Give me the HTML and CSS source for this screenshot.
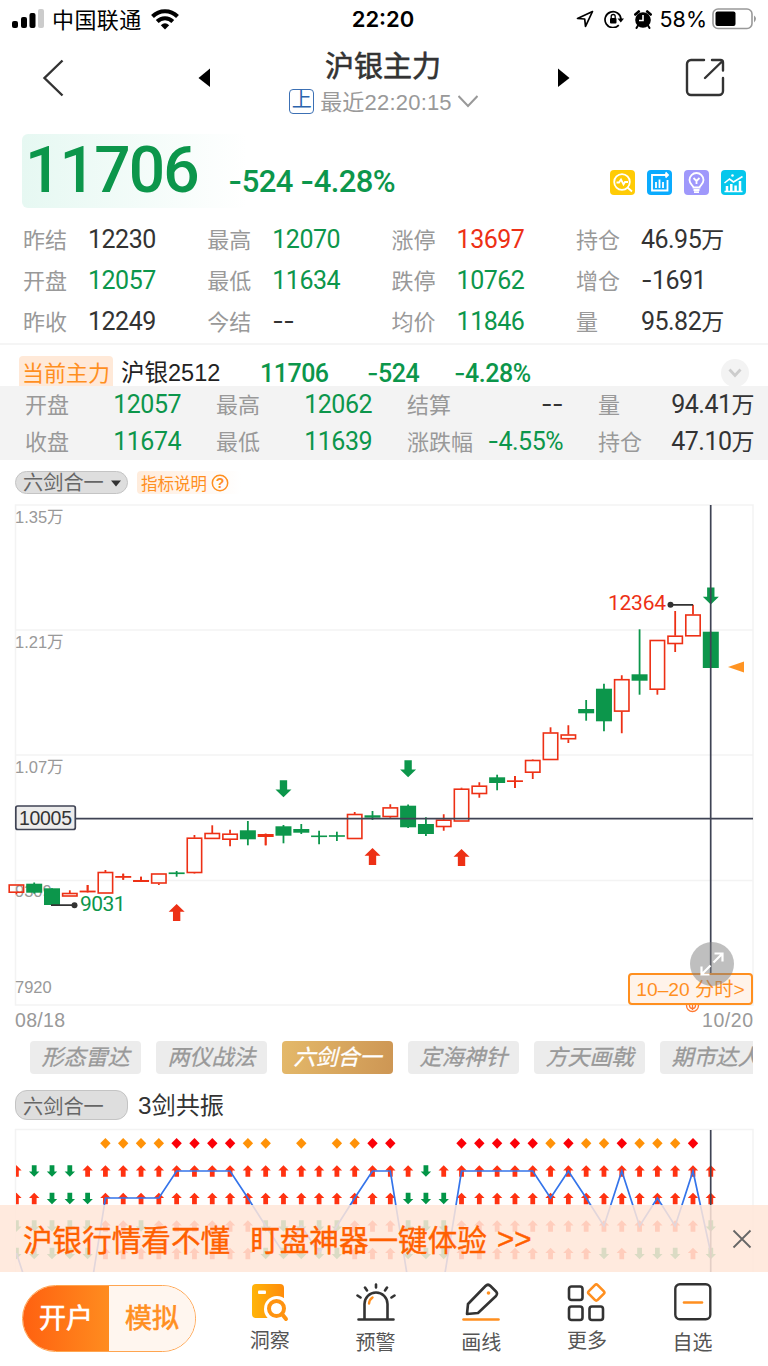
FILE: index.html
```html
<!DOCTYPE html>
<html lang="zh-CN">
<head>
    <meta charset="utf-8">
    <title>沪银主力</title>
    <link rel="stylesheet" href="styles.css">
</head>
<body>
    <div class="status-bar">
        <div class="status-left">
            <svg width="32" height="20" viewBox="0 0 32 20">
                <rect x="0" y="12" width="6" height="7" rx="2"/>
                <rect x="9" y="8" width="6" height="11" rx="2"/>
                <rect x="17.5" y="4" width="6" height="15" rx="2"/>
                <rect x="26" y="0" width="6" height="19" rx="2" fill="#ccc"/>
            </svg>
            <span class="carrier">中国联通</span>
            <svg width="28" height="21" viewBox="0 0 28 21" fill="none" stroke="#000" stroke-width="4">
                <path d="M1.5 7.5C8.5 0.4 19.500 0.400 26.500 7.500"/>
                <path d="M6.200 12.500C10.500 8.200 17.500 8.200 21.800 12.500"/>
                <path d="M14 20.500L9.800 16.200Q14 12.500 18.200 16.200Z" fill="#000" stroke="none"/>
            </svg>
        </div>
        <div class="status-time">22:20</div>
        <div class="status-right">
            <svg width="18" height="18" viewBox="0 0 18 18" fill="none" stroke="#000" stroke-width="1.7" stroke-linejoin="round"><path d="M16.500 1.500L1.500 8.500L8.700 9L9.500 16.300Z"/></svg>
            <svg class="lock" width="20" height="18" viewBox="0 0 20 18">
                <path d="M14.800 15.200A8 8 0 1 1 17 9" fill="none" stroke="#000" stroke-width="1.700"/>
                <path d="M13.500 8.500H20L16.800 12.500Z"/>
                <rect x="6" y="8" width="6.500" height="5.500" rx="1"/>
                <path d="M7.200 8V6.500A2 2 0 0 1 11.200 6.500V8" fill="none" stroke="#000" stroke-width="1.300"/>
            </svg>
            <svg class="alarm" width="18" height="19" viewBox="0 0 18 19">
                <circle cx="9" cy="10" r="7.800"/>
                <path d="M1.300 4.500L4.800 1.500M16.700 4.500L13.200 1.500" stroke="#000" stroke-width="2.600" stroke-linecap="round"/>
                <path d="M4 15.500L2.500 18M14 15.500L15.500 18" stroke="#000" stroke-width="2" stroke-linecap="round"/>
                <path d="M9 5V10.500H5" fill="none" stroke="#fff" stroke-width="1.600"/>
            </svg>
            <span class="percent">58%</span>
            <svg width="46" height="22" viewBox="0 0 46 22">
                <rect x="1" y="1" width="39" height="19.500" rx="5" fill="#fff" stroke="#999" stroke-width="1.600"/>
                <rect x="3.500" y="3.500" width="20" height="14.500" rx="2"/>
                <path d="M42 7.500Q46 10.500 42 14.500Z" fill="#999"/>
            </svg>
        </div>
    </div>

    <div class="nav">
        <svg class="back" width="22" height="38" viewBox="0 0 22 38"><path d="M20.500 1.500L2.500 19L20.500 36.500" fill="none" stroke="#333" stroke-width="2.400"/></svg>
        <svg class="prev" width="12" height="20" viewBox="0 0 12 20"><path d="M12 0.500V19L0.500 10Z"/></svg>
        <div class="nav-title">
            <h1>沪银主力</h1>
            <div class="nav-sub">
                <span class="market">上</span>
                <span class="updated">最近22:20:15</span>
                <svg width="20" height="13" viewBox="0 0 20 13"><path d="M0.500 1L10 11L19.500 1" fill="none" stroke="#999" stroke-width="2"/></svg>
            </div>
        </div>
        <svg class="next" width="12" height="20" viewBox="0 0 12 20"><path d="M0 0.500V19L11.500 10Z"/></svg>
        <svg class="share" width="40" height="40" viewBox="0 0 40 40" fill="none" stroke="#333" stroke-width="2.400" stroke-linecap="round">
            <path d="M19 2H6A4 4 0 0 0 2 6V33A4 4 0 0 0 6 37H34A4 4 0 0 0 38 33V20"/>
            <path d="M20 20L37 3.500M27 2H35.500Q38 2 38 4.500V12.500"/>
        </svg>
    </div>

    <div class="price">
        <div class="last">11706</div>
        <div class="change"><i>-</i>524 <i>-</i>4.28%</div>
        <div class="tools">
            <svg width="25" height="25" viewBox="0 0 25 25" fill="none" stroke="#fff" stroke-width="1.800">
                <rect width="25" height="25" rx="4" fill="#ffcb05" stroke="none"/>
                <circle cx="12" cy="12" r="7.800"/><path d="M17.500 17.500L22 21.500M6.500 12.500H9L11 9.500L13.500 14.500L15 12H18"/>
            </svg>
            <svg width="25" height="25" viewBox="0 0 25 25" fill="none" stroke="#fff" stroke-width="1.800">
                <rect width="25" height="25" rx="4" fill="#0aabfe" stroke="none"/>
                <path d="M16 5H5V20.500H20.500V10M15 5H21M18.500 2.500L21 5L18.500 7.500M9 18V12M12.500 18V9.500M16 18V12"/>
            </svg>
            <svg width="25" height="25" viewBox="0 0 25 25" fill="none" stroke="#fff" stroke-width="1.800">
                <rect width="25" height="25" rx="4" fill="#9f98fb" stroke="none"/>
                <path d="M9.500 17.500C9.500 15.500 5.500 14.500 5.500 10A7 7 0 0 1 19.500 10C19.500 14.500 15.500 15.500 15.500 17.500ZM9.500 20H15.500M10 22.200H15M9.500 8L12.500 11L15.500 8M12.500 11V14"/>
            </svg>
            <svg width="25" height="25" viewBox="0 0 25 25" fill="none" stroke="#fff" stroke-width="1.600">
                <rect width="25" height="25" rx="4" fill="#06c7ec" stroke="none"/>
                <path d="M3.500 13L8.500 9L12.500 12L21.500 6.500M3.500 21.500H21.500"/>
                <path d="M6 21V16M10.300 21V14M14.600 21V15.500M19 21V11" stroke-width="2.500"/>
                <circle cx="11.500" cy="5.500" r="1.300" fill="#fff" stroke="none"/>
            </svg>
        </div>
    </div>

    <div class="quotes">
        <div><label>昨结</label><b>12230</b></div>
        <div><label>最高</label><b class="down">12070</b></div>
        <div><label>涨停</label><b class="up">13697</b></div>
        <div><label>持仓</label><b>46.95<em>万</em></b></div>
        <div><label>开盘</label><b class="down">12057</b></div>
        <div><label>最低</label><b class="down">11634</b></div>
        <div><label>跌停</label><b class="down">10762</b></div>
        <div><label>增仓</label><b><i>-</i>1691</b></div>
        <div><label>昨收</label><b>12249</b></div>
        <div><label>今结</label><b><i>--</i></b></div>
        <div><label>均价</label><b class="down">11846</b></div>
        <div><label>量</label><b>95.82<em>万</em></b></div>
    </div>

    <div class="contract">
        <span class="tag">当前主力</span>
        <span class="name">沪银2512</span>
        <b class="c-last">11706</b>
        <b class="c-diff"><i>-</i>524</b>
        <b class="c-rate"><i>-</i>4.28%</b>
        <span class="fold"><svg width="14" height="10" viewBox="0 0 14 10"><path d="M1.500 1.500L7 7.500L12.500 1.500" fill="none" stroke="#ccc" stroke-width="2.800"/></svg></span>
    </div>

    <div class="detail">
        <div><label>开盘</label><b class="down">12057</b></div>
        <div><label>最高</label><b class="down">12062</b></div>
        <div><label>结算</label><b><i>--</i></b></div>
        <div><label>量</label><b>94.41<em>万</em></b></div>
        <div><label>收盘</label><b class="down">11674</b></div>
        <div><label>最低</label><b class="down">11639</b></div>
        <div><label>涨跌幅</label><b class="down"><i>-</i>4.55%</b></div>
        <div><label>持仓</label><b>47.10<em>万</em></b></div>
    </div>

    <div class="indicator-bar">
        <span class="pill">六剑合一<svg width="10" height="7" viewBox="0 0 10 7"><path d="M0 0.500H10L5 6.500Z" fill="#333"/></svg></span>
        <span class="explain">指标说明<svg width="18" height="18" viewBox="0 0 18 18"><circle cx="9" cy="9" r="7.700" fill="none" stroke="#ff8f1f" stroke-width="1.500"/><text x="9" y="14" text-anchor="middle">?</text></svg></span>
    </div>

    <div class="kline">
        <svg id="kline" width="768" height="536" viewBox="0 496 768 536"></svg>
        <div class="minute">10–20 分时&gt;</div>
        <div class="expand">
            <svg width="24" height="24" viewBox="0 0 24 24" fill="none" stroke="#fff" stroke-width="2.200"><path d="M14.500 1.500H22.500V9.500M22.500 1.500L13.500 10.500M1.500 14.500V22.500H9.500M1.500 22.500L10.500 13.500"/></svg>
        </div>
    </div>

    <div class="tabs">
        <span>形态雷达</span>
        <span>两仪战法</span>
        <span class="active">六剑合一</span>
        <span>定海神针</span>
        <span>方天画戟</span>
        <span>期市达人</span>
    </div>

    <div class="sub-bar">
        <span class="pill big">六剑合一</span>
        <span class="sub-name">3剑共振</span>
    </div>

    <div class="swords">
        <svg id="swords" width="768" height="146" viewBox="0 1126 768 146"></svg>
        <div class="banner">
            <span>沪银行情看不懂</span>
            <span>盯盘神器一键体验</span>
            <span class="more">&gt;&gt;</span>
            <svg width="20" height="20" viewBox="0 0 20 20"><path d="M1.500 1.500L18.500 18.500M18.500 1.500L1.500 18.500" stroke="#666" stroke-width="1.800"/></svg>
        </div>
    </div>

    <div class="footer">
        <div class="account"><span class="open">开户</span><span class="demo">模拟</span></div>
        <div class="menu">
            <div class="item">
                <svg width="40" height="40" viewBox="0 0 40 40">
                    <defs><linearGradient id="gold" x1="0" x2="1"><stop offset="0" stop-color="#ffb40a"/><stop offset="1" stop-color="#ff8c0a"/></linearGradient></defs>
                    <rect x="2" y="2" width="32" height="34" rx="4" fill="url(#gold)"/>
                    <rect x="8" y="8.500" width="8" height="3.500" rx="1" fill="#fff"/>
                    <circle cx="27" cy="27" r="13" fill="#fff"/>
                    <circle cx="26.500" cy="26.500" r="7.500" fill="none" stroke="#ff9310" stroke-width="4"/>
                    <path d="M32 32L36 37" stroke="#ff9310" stroke-width="4" stroke-linecap="round"/>
                </svg>
                <span>洞察</span>
            </div>
            <div class="item low">
                <svg width="40" height="40" viewBox="0 0 40 40" fill="none" stroke="#333" stroke-width="2.600" stroke-linecap="round">
                    <path d="M2.500 37.500H37.500M8.500 37V22A11.500 11.500 0 0 1 31.500 22V37M20 5.500V2.500M11 8.500L9 5.500M29 8.500L31 5.500M4.500 15.500L1.500 13.500M35.500 15.500L38.500 13.500"/>
                    <path d="M13 21.500Q13.500 17.500 16.500 15.500" stroke="#ff8f1f" stroke-width="2.400"/>
                </svg>
                <span>预警</span>
            </div>
            <div class="item low">
                <svg width="40" height="40" viewBox="0 0 40 40" fill="none" stroke="#333" stroke-width="2.600" stroke-linejoin="round" stroke-linecap="round">
                    <path d="M7 22L24.500 4Q27 1.500 29.500 4L35 9.500Q37 11.500 35 14L17 31L6 32Z"/>
                    <circle cx="27.500" cy="11" r="1.800" fill="#ff8f1f" stroke="none"/>
                    <path d="M2.500 37.500H37.500" stroke="#ff8f1f"/>
                </svg>
                <span>画线</span>
            </div>
            <div class="item">
                <svg width="40" height="40" viewBox="0 0 40 40" fill="none" stroke="#333" stroke-width="2.600" stroke-linejoin="round">
                    <rect x="2" y="4.500" width="13.500" height="13.500" rx="2.500"/>
                    <rect x="2" y="24.500" width="13.500" height="13.500" rx="2.500"/>
                    <rect x="22.500" y="24.500" width="13.500" height="13.500" rx="2.500"/>
                    <rect x="23" y="4.200" width="12.500" height="12.500" rx="2" transform="rotate(45 29.200 10.500)" stroke="#ff8f1f"/>
                </svg>
                <span>更多</span>
            </div>
            <div class="item low">
                <svg width="40" height="40" viewBox="0 0 40 40" fill="none" stroke="#333" stroke-width="2.400" stroke-linecap="round">
                    <rect x="2.300" y="2.300" width="35" height="35" rx="4.500"/>
                    <path d="M11 20.500H29" stroke="#ff8f1f" stroke-width="2.600"/>
                </svg>
                <span>自选</span>
            </div>
        </div>
    </div>
    <script src="chart.js"></script>
</body>
</html>
```

FILE: styles.css
```css
* {
    box-sizing: border-box;
}
body {
    margin: 0;
    width: 768px;
    height: 1366px;
    overflow: hidden;
    background: #fff;
    color: #333;
    font-family: "Liberation Sans", "Noto Sans CJK SC", sans-serif;
}
svg {
    display: block;
    flex: none;
}
b, h1 {
    font-weight: normal;
}
b, .last, .change {
    font-family: Roboto, "Noto Sans CJK SC", sans-serif;
}
/* wider minus sign */
b i, .change i {
    font-family: Inter, sans-serif;
    font-style: normal;
    line-height: 0;
}
span, b, label {
    white-space: nowrap;
}
.down {
    color: #0c964b;
}
.up {
    color: #ed3015;
}

/* status bar */
.status-bar {
    display: grid;
    grid-template-columns: 1fr 70px 1fr;
    align-items: center;
    height: 40px;
    padding: 0 10px 2px 12px;
    color: #000;
    font-family: Inter, "Noto Sans CJK SC", sans-serif;
    font-size: 22px;
}
.status-left, .status-right {
    display: flex;
    align-items: center;
}
.carrier {
    margin: -3px 9px 0 8px;
    letter-spacing: 0.4px;
}
.status-time {
    margin-left: -4px;
    font-size: 22px;
    font-weight: 600;
    text-align: center;
}
.status-right {
    justify-content: flex-end;
}
.lock {
    margin-left: 10px;
}
.alarm {
    margin: 0 8px 0 10px;
}
.percent {
    margin-right: 5px;
    font-size: 21.5px;
}

/* title */
.nav {
    display: flex;
    align-items: center;
    height: 80px;
    padding: 0 42px;
}
.back {
    margin-top: -4px;
}
.prev {
    margin: -4px 0 0 134px;
}
.nav-title {
    width: 343px;
    padding-left: 3px;
    text-align: center;
}
.nav-title h1 {
    margin: 0;
    padding-top: 1px;
    height: 43px;
    font-size: 29px;
    line-height: 44px;
    -webkit-text-stroke: 0.6px #333;
}
.nav-sub {
    display: flex;
    justify-content: center;
    align-items: center;
    gap: 6px;
    height: 30px;
    padding-left: 1px;
    font-size: 22px;
    color: #999;
}
.updated {
    margin-top: -4px;
    letter-spacing: 0.2px;
}
.market {
    width: 25px;
    height: 25px;
    margin-top: -1px;
    border: 1.5px solid #3c70b4;
    border-radius: 4px;
    font-size: 20px;
    line-height: 21px;
    color: #2b63ad;
}
.next {
    margin: -4px 0 0 5px;
}
.share {
    margin: -4px 0 0 115px;
}

/* price */
.price {
    display: flex;
    height: 99px;
    padding: 14px 22px 0;
    color: #0c964b;
}
.last {
    flex: none;
    width: 225px;
    height: 74px;
    padding-left: 3px;
    border-radius: 6px;
    background: linear-gradient(90deg, #e6f8f2, #fff);
    font-size: 64px;
    font-weight: 500;
    line-height: 74px;
    letter-spacing: -1.8px;
}
.change {
    flex: none;
    width: 385px;
    margin-left: -19px;
    padding-top: 29px;
    font-size: 31px;
    font-weight: 500;
    line-height: 38px;
    letter-spacing: -0.6px;
}
.tools {
    display: flex;
    gap: 12px;
    margin: 36px 0 0 -3px;
}

/* quote table */
.quotes {
    display: grid;
    grid-template-columns: repeat(4, 184.300px);
    grid-auto-rows: 41px;
    height: 126px;
    padding-left: 23px;
    border-bottom: 2px solid #f5f5f5;
}
.quotes div, .detail div {
    display: flex;
    align-items: center;
}
.quotes label {
    width: 65px;
}
label {
    margin-top: -4px;
    font-size: 22px;
    color: #999;
}
b {
    font-size: 25px;
    letter-spacing: -0.500px;
}
b em {
    font-style: normal;
    font-size: 23px;
    line-height: 0;
}
.quotes b, .detail b {
    line-height: 29px;
    height: 29px;
}

/* main contract */
.contract {
    display: flex;
    height: 41px;
    padding: 11px 19px 0;
    line-height: 35px;
    overflow: hidden;
    font-size: 22px;
}
.contract b {
    color: #0c964b;
    font-weight: 500;
}
.tag {
    width: 94px;
    height: 34px;
    border-radius: 4px;
    background: #ffe9d8;
    color: #ff8f1f;
    text-align: center;
}
.name {
    width: 140px;
    padding-left: 8px;
    color: #222;
    font-size: 23.5px;
}
.c-last {
    width: 107px;
    padding-left: 7px;
}
.c-diff {
    width: 87px;
    padding-left: 7px;
}
.c-rate {
    width: 273px;
    padding-left: 7px;
}
.fold {
    display: flex;
    align-items: center;
    justify-content: center;
    width: 28px;
    height: 28px;
    margin: 3px 0 0 1px;
    border-radius: 50%;
    background: #f3f3f3;
}
.detail {
    display: grid;
    grid-template-columns: repeat(4, 156px);
    grid-auto-rows: 37px;
    column-gap: 35px;
    height: 74px;
    padding-left: 25px;
    background: #f3f3f3;
}
.detail div {
    justify-content: space-between;
}

/* indicator name */
.indicator-bar {
    display: flex;
    align-items: center;
    gap: 9px;
    height: 36px;
    padding: 9px 0 0 15px;
}
.pill {
    display: flex;
    align-items: center;
    justify-content: space-between;
    width: 113px;
    height: 23px;
    padding: 1px 6px 0 7px;
    border: 1px solid #c4c4c4;
    border-radius: 12px;
    background: #dedede;
    color: #666;
    font-size: 20.200px;
    line-height: 20px;
}
.explain {
    display: flex;
    align-items: center;
    gap: 4px;
    width: 104px;
    height: 23px;
    padding-left: 4px;
    border-radius: 4px;
    background: linear-gradient(90deg, #ffecdc, #fff);
    color: #ff8f1f;
    font-size: 16.500px;
}
.explain text {
    fill: #ff8f1f;
    font-size: 14px;
    font-weight: bold;
}

/* candles */
.kline {
    position: relative;
    height: 536px;
}
.kline text {
    font-family: "Liberation Sans", "Noto Sans CJK SC", sans-serif;
}
.kline .din {
    font-family: Roboto, sans-serif;
}
.minute {
    position: absolute;
    right: 15px;
    bottom: 27px;
    width: 125px;
    height: 32px;
    border: 2px solid #ff8f1f;
    border-radius: 4px;
    background: #fff3ea;
    color: #ff8f1f;
    font-size: 19.200px;
    line-height: 30px;
    text-align: center;
    white-space: nowrap;
}
.expand {
    position: absolute;
    left: 690px;
    top: 446px;
    display: flex;
    align-items: center;
    justify-content: center;
    width: 44px;
    height: 44px;
    border-radius: 50%;
    background: rgba(128, 128, 128, 0.500);
}

/* strategy tabs */
.tabs {
    display: flex;
    gap: 15px;
    width: 753px;
    height: 52px;
    padding: 9px 0 0 30px;
    overflow: hidden;
}
.tabs span {
    flex: none;
    width: 111px;
    height: 33px;
    border-radius: 4px;
    background: #ececec;
    color: #999;
    font-size: 22px;
    font-style: italic;
    line-height: 34px;
    text-align: center;
    -webkit-text-stroke: 0.300px;
}
.tabs .active {
    background: linear-gradient(100deg, #e4b96a, #cd9654);
    color: #fff;
}
.sub-bar {
    display: flex;
    align-items: center;
    gap: 10px;
    height: 42px;
    padding: 0 15px;
}
.big {
    height: 30px;
    padding-top: 3px;
}
.sub-name {
    margin-top: -3px;
    font-size: 24.200px;
}

/* resonance */
.swords {
    position: relative;
    height: 146px;
}
.banner {
    position: absolute;
    left: 0;
    bottom: 0;
    display: flex;
    align-items: center;
    width: 768px;
    height: 67px;
    padding: 0 16px 0 23px;
    background: rgba(255, 230, 216, 0.860);
    color: #ff6000;
    font-size: 29.600px;
    -webkit-text-stroke: 0.400px;
}
.banner span {
    margin-right: 20px;
}
.banner .more {
    margin-left: -10px;
}
.banner svg {
    margin-left: auto;
}

/* footer */
.footer {
    display: flex;
    height: 94px;
    padding-left: 22px;
}
.account {
    display: flex;
    width: 174px;
    height: 67px;
    margin-top: 13px;
    border: 1.500px solid #ffa550;
    border-radius: 34px;
    overflow: hidden;
    font-size: 27px;
    line-height: 67px;
    text-align: center;
    -webkit-text-stroke: 0.600px;
}
.open {
    width: 86px;
    background: linear-gradient(90deg, #ff6110, #ff8c1f);
    color: #fff;
}
.demo {
    flex: 1;
    background: #fff6ef;
    color: #ff8f1f;
}
.menu {
    display: flex;
    margin-left: 21px;
}
.item {
    display: flex;
    flex-direction: column;
    align-items: center;
    width: 105.700px;
    padding-top: 10px;
    font-size: 20px;
    line-height: 30px;
    color: #555;
}
.item span {
    margin-top: 4px;
}
.item.low span {
    margin-top: 6px;
}
```

FILE: chart.js
```js
const RED = '#ed3015';
const GREEN = '#0c964b';
const LINE = '#3f4354';
const posX = i => 16.4 + i * 17.805;

// [direction, body top, body bottom, high, low]
const candles = [
    ['r', 884.5, 892.7, 884.5, 894.5], ['g', 883.7, 892.7, 882.5, 893.6],
    ['g', 888.3, 905, 888.3, 905], ['r', 893, 896.5, 890.3, 896.5],
    ['r', 890.6, 892.4, 885, 892], ['r', 872, 893.5, 870, 893.5],
    ['r', 876, 877.8, 873.7, 879.7], ['r', 880, 882, 876.7, 882],
    ['r', 873.5, 883.5, 873.5, 885], ['g', 872.4, 874.1, 871, 876.7],
    ['r', 837.7, 873, 835, 873.5], ['r', 833, 838.9, 825.3, 838.9],
    ['r', 833.7, 839.7, 829.7, 846.3], ['g', 830.3, 839.3, 821, 845.3],
    ['r', 834, 837, 833.7, 845.3], ['g', 826.3, 835.7, 825, 843.3],
    ['g', 829, 832.7, 824, 834], ['g', 835.5, 837.1, 830.7, 844.3],
    ['g', 835.2, 836.8, 831.7, 841], ['r', 814, 839, 812, 839],
    ['g', 815.3, 817.7, 811, 820], ['r', 807.4, 817, 804.3, 817.7],
    ['g', 805.7, 827.3, 804.5, 828], ['g', 824, 834, 817.3, 836],
    ['r', 819.7, 827, 814.3, 830.7], ['r', 788.7, 821.5, 787.7, 821.5],
    ['r', 785.7, 794, 782.3, 797.7], ['g', 777.3, 783, 774.7, 790.3],
    ['r', 780.3, 782, 776, 788], ['r', 760, 772.7, 759.5, 779],
    ['r', 732.5, 760, 727.3, 760], ['r', 734.5, 739.2, 725.3, 743],
    ['g', 709, 713.3, 700, 720.7], ['g', 688.7, 721.3, 683.7, 731.3],
    ['r', 679.2, 711.6, 675.3, 733.3], ['g', 674.3, 680.7, 629.3, 694.7],
    ['r', 640, 689.7, 640, 694.7], ['r', 635.7, 644, 611, 652],
    ['r', 614.5, 636.3, 604.7, 636.3], ['g', 631.7, 668, 631.7, 668]
];

function arrow(x, y, up, w, h, color) {
    const s = up ? 1 : -1;
    const t = y - s * h / 2;
    const n = y - s * h * 0.04;
    const e = y + s * h / 2;
    const k = w * 0.23;
    return `<path fill="${color}" d="M${x} ${t}L${x + w / 2} ${n}H${x + k}V${e}H${x - k}V${n}H${x - w / 2}Z"/>`;
}

function drawKline() {
    let s = '<path d="M15.500 505H753V1005H15.500ZM15 630H753M15 755H753M15 880.500H753" fill="none" stroke="#f3f3f3" stroke-width="1.500"/>';
    s += '<g fill="#999" font-size="16.500">' +
        '<text x="15" y="523">1.35万</text><text x="15" y="648">1.21万</text>' +
        '<text x="15" y="773">1.07万</text><text x="15" y="897">9309</text>' +
        '<text x="15" y="993">7920</text></g>' +
        '<g fill="#999" font-size="19.500"><text x="15" y="1026.500" textLength="50">08/18</text>' +
        '<text x="702" y="1026.500" textLength="51">10/20</text></g>';
    candles.forEach(([dir, top, bottom, high, low], i) => {
        const x = posX(i);
        if (dir === 'g') {
            s += `<path d="M${x} ${high}V${low}" stroke="${GREEN}" stroke-width="1.800"/>`;
            s += `<rect x="${x - 8}" y="${top}" width="16" height="${bottom - top}" fill="${GREEN}"/>`;
        } else {
            s += `<path d="M${x} ${high}V${top}M${x} ${bottom}V${low}" stroke="${RED}" stroke-width="1.800"/>`;
            if (bottom - top < 3.2) {
                s += `<rect x="${x - 8}" y="${top}" width="16" height="${bottom - top}" fill="${RED}"/>`;
                s += `<path d="M${x} ${high}V${low}" stroke="${RED}" stroke-width="1.800"/>`;
            } else {
                s += `<rect x="${x - 7.2}" y="${top + 0.5}" width="14.400" height="${bottom - top - 1}" fill="none" stroke="${RED}" stroke-width="1.600"/>`;
            }
        }
    });
    // buy and sell signals
    [[9, 912.5], [20, 856.5], [25, 857.5]].forEach(([i, y]) => s += arrow(posX(i), y, true, 16, 17, RED));
    [[15, 788.7], [22, 768.7], [39, 596]].forEach(([i, y]) => s += arrow(posX(i), y, false, 16, 17, GREEN));
    // high and low marks
    s += '<path d="M670 604.800H693M51 905.200H74" stroke="#333" stroke-width="1.800"/>' +
        '<circle cx="670.500" cy="604.800" r="3" fill="#333"/><circle cx="74.500" cy="905.200" r="3" fill="#333"/>' +
        `<text class="din" x="608" y="610.300" font-size="21" textLength="58" fill="${RED}">12364</text>` +
        `<text class="din" x="80" y="910.500" font-size="21" textLength="45.500" fill="${GREEN}">9031</text>`;
    s += '<path d="M728 667L744 661.500V672.500Z" fill="#ff9423"/>';
    // crosshair
    s += `<path d="M76 818.600H753M710.700 505V975" stroke="${LINE}" stroke-width="1.700"/>` +
        `<rect x="15.800" y="806" width="59.500" height="23.500" rx="2" fill="#ececec" stroke="${LINE}" stroke-width="1.700"/>` +
        '<text x="19" y="824.800" font-size="19.500" textLength="53" fill="#333">10005</text>';
    s += '<g fill="none" stroke="#ff7a33" stroke-width="1.300"><circle cx="692.500" cy="1005.500" r="6"/><circle cx="692.500" cy="1005.500" r="3"/><path d="M692.500 1005V1010"/></g>';
    document.getElementById('kline').innerHTML = s;
}

function drawSwords() {
    let s = '<path d="M15.500 1280V1129.500H753V1280" fill="none" stroke="#f3f3f3" stroke-width="1.500"/>';
    // o = two swords, r = three or more
    const marks = '.....oooorrrroo.o.oorr...rrrrroroorooor';
    [...marks].forEach((m, i) => {
        if (m === '.') return;
        const x = posX(i) - 5.2;
        s += `<path d="M${x.toFixed(1)} 1143.300l5.200 -5.400l5.200 5.400l-5.200 5.400Z" fill="${m === 'o' ? '#ff9208' : '#fb0007'}"/>`;
    });
    // u = long, d = short
    const rows = [
        'udddu' + 'u'.repeat(18) + 'd' + 'u'.repeat(16),
        'uuddd' + 'u'.repeat(17) + 'ddd' + 'u'.repeat(15),
        'ddddduuduuuuuuddddduuu' + 'ddd' + 'u'.repeat(14) + 'd',
        'ddddd' + 'u'.repeat(9) + 'ddddduuuddd' + 'u'.repeat(8) + 'dudddud'
    ];
    s += '<clipPath id="pane"><rect x="16" y="1130" width="737" height="142"/></clipPath><g clip-path="url(#pane)">';
    rows.forEach((row, r) => {
        [...row].forEach((d, i) => {
            s += arrow(posX(i), 1171 + r * 27.5, d === 'u', 10.4, 11.6, d === 'u' ? '#ff3211' : '#029547');
        });
    });
    const level = [1253, 1308, 1308, 1308, 1310, 1198, 1198, 1198, 1198, 1171, 1171, 1171, 1171, 1198, 1226, 1253, 1226, 1253, 1226, 1198,
        1171, 1171, 1281, 1308, 1281, 1171, 1171, 1171, 1171, 1171, 1198, 1171, 1198, 1226, 1171, 1226, 1198, 1226, 1171, 1253];
    s += `<polyline points="${level.map((y, i) => posX(i) + ',' + y).join(' ')}" fill="none" stroke="#3474ea" stroke-width="1.700"/>`;
    s += `<path d="M710.700 1130V1272" stroke="${LINE}" stroke-width="1.700"/></g>`;
    document.getElementById('swords').innerHTML = s;
}

drawKline();
drawSwords();
```
